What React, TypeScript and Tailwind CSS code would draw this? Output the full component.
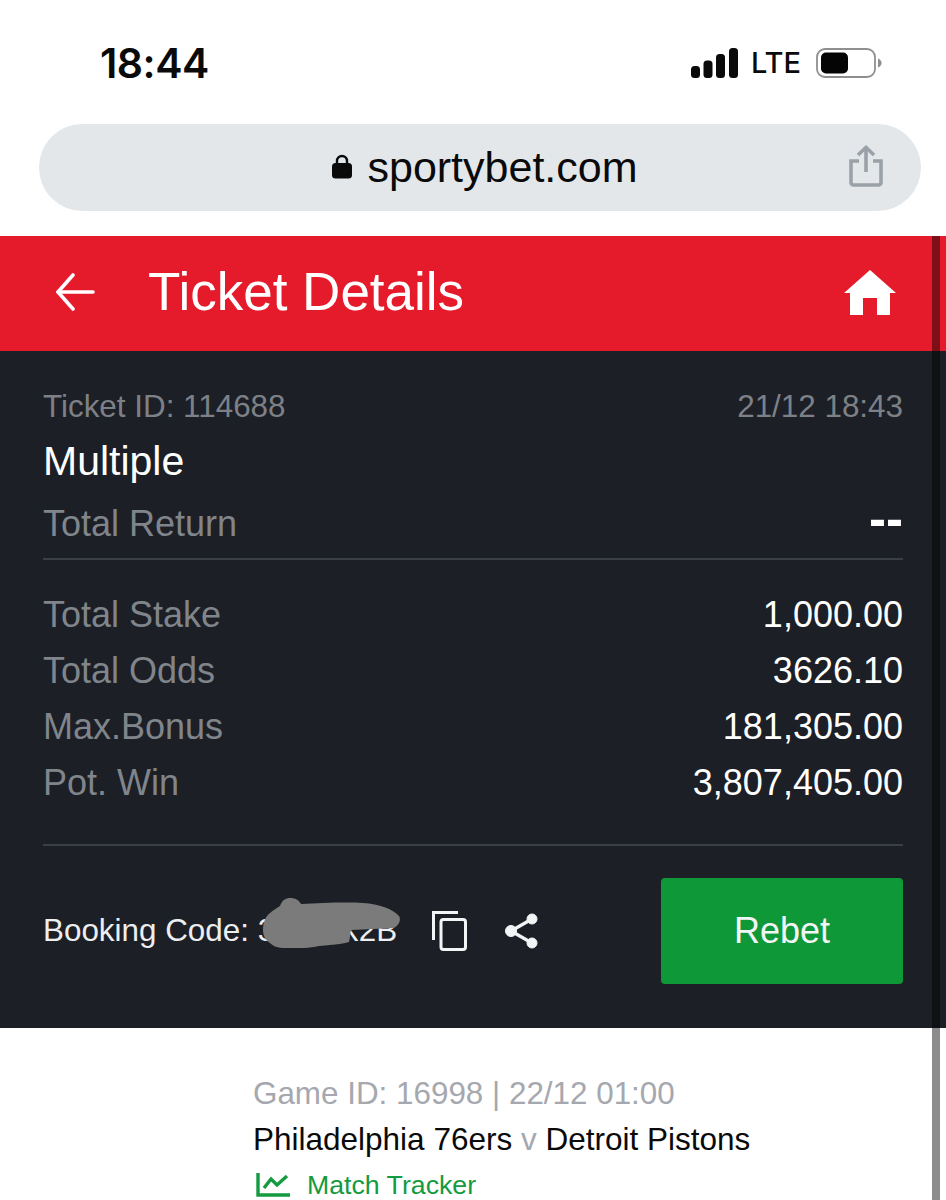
function SignalIcon() {
  return (
    <svg width="47" height="30" viewBox="0 0 47 30" fill="#0a0a0a">
      <rect x="0" y="18" width="9" height="12" rx="3.5" />
      <rect x="12.5" y="12.5" width="9" height="17.5" rx="3.5" />
      <rect x="25" y="6" width="9" height="24" rx="3.5" />
      <rect x="38" y="0" width="9" height="30" rx="3.5" />
    </svg>
  );
}

function BatteryIcon() {
  return (
    <svg width="66" height="32" viewBox="0 0 66 32">
      <rect x="1" y="2" width="58" height="28" rx="8" fill="none" stroke="#8f8f8f" strokeWidth="1.8" />
      <rect x="5" y="5.5" width="27" height="21" rx="5" fill="#050505" />
      <path d="M62 11.5c2.4 1 3.6 2.6 3.6 4.5s-1.2 3.5-3.6 4.5z" fill="#8f8f8f" />
    </svg>
  );
}

function LockIcon() {
  return (
    <svg width="20" height="25" viewBox="0 0 20 25" fill="#0a0a0a">
      <path d="M5 10V7a5 5 0 0 1 10 0v3" fill="none" stroke="#0a0a0a" strokeWidth="2.4" />
      <rect x="0" y="9" width="20" height="15.5" rx="3.5" />
    </svg>
  );
}

function ShareIcon() {
  return (
    <svg width="36" height="42" viewBox="0 0 36 42" fill="none" stroke="#9ba1a8" strokeWidth="3.6">
      <path d="M18 27V3" />
      <path d="M10 10L18 2.5l8 7.5" />
      <path d="M11 16H3v21.5a2.5 2.5 0 0 0 2.5 2.5h25a2.5 2.5 0 0 0 2.5-2.5V16h-8" />
    </svg>
  );
}

function BackArrow() {
  return (
    <svg width="40" height="38" viewBox="0 0 40 38" fill="none" stroke="#ffffff" strokeWidth="3.6" strokeLinecap="round" strokeLinejoin="round">
      <path d="M38 19H3" />
      <path d="M18 2L3 19l15 17" />
    </svg>
  );
}

function HomeIcon() {
  return (
    <svg width="52" height="45" viewBox="0 0 52 45" fill="#ffffff">
      <path d="M26 0L52 23H46V45H33V28H19V45H6V23H0z" />
    </svg>
  );
}

function CopyIcon() {
  return (
    <svg width="35" height="40" viewBox="0 0 35 40" fill="none" stroke="#f3f4f6" strokeWidth="3">
      <path d="M1.5 29V1.5H26" />
      <rect x="9" y="8.5" width="24.5" height="30" rx="2.5" />
    </svg>
  );
}

function NetworkIcon() {
  return (
    <svg width="33" height="36" viewBox="0 0 33 36" fill="#f3f4f6" stroke="#f3f4f6">
      <path d="M27 6L6 18l21 12" fill="none" strokeWidth="3.2" />
      <circle cx="27" cy="6" r="5" />
      <circle cx="6" cy="18" r="5.5" />
      <circle cx="27" cy="30" r="5" />
    </svg>
  );
}

function TrackerIcon() {
  return (
    <svg width="34" height="24" viewBox="0 0 34 24" fill="none" stroke="#149a40" strokeWidth="3.4">
      <path d="M2 0V22H34" />
      <path d="M8 15L15 6l6 6 10-9" />
    </svg>
  );
}

function Row({ label, value }: { label: string; value: string }) {
  return (
    <div className="flex h-[56px] items-center justify-between">
      <span className="text-[#80858b]">{label}</span>
      <span className="text-white">{value}</span>
    </div>
  );
}

export default function App() {
  return (
    <div className="relative h-[1200px] w-[946px] overflow-hidden bg-white font-['Liberation_Sans',Arial,sans-serif]">
      <div className="flex h-[124px] items-start justify-between pl-[100px] pr-[64px] pt-[39px]">
        <span className="font-['Inter',sans-serif] text-[41px] leading-[48px] font-semibold tracking-[-0.5px] text-[#0a0a0a]">18:44</span>
        <div className="flex items-center pt-[8px]">
          <SignalIcon />
          <span className="ml-[13px] font-['Inter',sans-serif] text-[29px] leading-[32px] font-medium text-[#0a0a0a]">LTE</span>
          <div className="ml-[15px]">
            <BatteryIcon />
          </div>
        </div>
      </div>

      <div className="ml-[39px] mr-[25px] flex h-[87px] items-center rounded-[44px] bg-[#e4e7ea] pr-[37px]">
        <div className="flex flex-1 items-center justify-center gap-[15px] pb-[2px] pl-[83px]">
          <LockIcon />
          <span className="text-[43px] leading-[48px] text-[#0a0a0a]">sportybet.com</span>
        </div>
        <div className="mb-[3px]">
          <ShareIcon />
        </div>
      </div>

      <div className="mt-[25px] flex h-[115px] items-center bg-[#e51a2a] pb-[3px] pl-[55px] pr-[50px]">
        <BackArrow />
        <span className="ml-[53px] flex-1 text-[53px] leading-[60px] text-white">Ticket Details</span>
        <HomeIcon />
      </div>

      <div className="h-[677px] bg-[#1c1f26] px-[43px] pt-[36px]">
        <div className="flex items-center justify-between text-[31.4px] leading-[40px] text-[#7d8187]">
          <span>Ticket ID: 114688</span>
          <span>21/12 18:43</span>
        </div>
        <div className="mt-[11px] text-[41px] leading-[46px] text-white">Multiple</div>
        <div className="mt-[19px] flex h-[41px] items-center justify-between text-[36px] leading-[41px]">
          <span className="text-[#80858b]">Total Return</span>
          <span className="mb-[10px] text-[51px] font-bold text-white">--</span>
        </div>
        <div className="mt-[14px] border-t-2 border-[#3a3e45]" />
        <div className="border-b-2 border-[#3a3e45] pt-[26px] pb-[34px] text-[36px] leading-[41px]">
          <Row label="Total Stake" value="1,000.00" />
          <Row label="Total Odds" value="3626.10" />
          <Row label="Max.Bonus" value="181,305.00" />
          <Row label="Pot. Win" value="3,807,405.00" />
        </div>
        <div className="mt-[32px] flex h-[106px] items-center">
          <div className="relative w-[359px] text-[31.4px] leading-[40px] whitespace-nowrap text-[#eceef0]">
            Booking Code: 3XXXX2B
            <svg className="absolute top-[-13px] left-[220px]" width="138" height="50" viewBox="0 0 138 50" fill="#7b7b7b">
              <path d="M0 32C0 24 3 18 7 15c3-3 7-5 10-7C19 2 23 0 27 0c5 0 9 2 11 6 20-1 45-2 62-1 16 1 30 6 36 13 2 3 1 8-5 12-14 1-28 1-43 2-1 4-1 8-2 12-10 3-22 3-30 4-10 2-24 3-33 2C14 50 10 48 7 45 2 42 0 37 0 32z" />
            </svg>
          </div>
          <div className="ml-[30px]">
            <CopyIcon />
          </div>
          <div className="ml-[38px]">
            <NetworkIcon />
          </div>
          <button className="ml-auto h-[106px] w-[242px] rounded-[4px] bg-[#0f9838] text-[36px] text-[#f3f4f6]">Rebet</button>
        </div>
      </div>

      <div className="pl-[253px] pt-[46px]">
        <div className="text-[31.4px] leading-[40px] text-[#a5a8ae]">Game ID: 16998 | 22/12 01:00</div>
        <div className="mt-[5px] text-[31.5px] leading-[40px] text-[#0a0a0a]">
          Philadelphia 76ers <span className="text-[#a5a8ae]">v</span> Detroit Pistons
        </div>
        <div className="mt-[8px] flex items-center gap-[17px] pl-[3px] text-[26.7px] leading-[36px] text-[#149a40]">
          <TrackerIcon />
          <span>Match Tracker</span>
        </div>
      </div>

      {/* overlay scrollbar */}
      <div className="absolute top-[236px] right-[6px] h-[964px] w-[8px] bg-[#000000]/45" />
    </div>
  );
}
